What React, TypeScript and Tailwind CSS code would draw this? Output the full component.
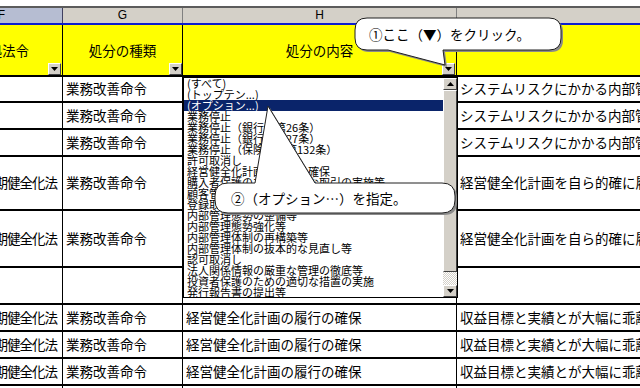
import React from 'react';

const listItems = [
  '(すべて)',
  '(トップテン...)',
  '(オプション...)',
  '業務停止',
  '業務停止（銀行法第26条）',
  '業務停止（銀行法第27条）',
  '業務停止（保険業法第132条）',
  '許可取消し',
  '経営健全化計画の履行の確保',
  '購入者保護のための適正な取引の実施等',
  '顧客管理態勢の整備等',
  '登録取消し',
  '内部管理態勢の整備等',
  '内部管理態勢強化等',
  '内部管理体制の再構築等',
  '内部管理体制の抜本的な見直し等',
  '認可取消し',
  '法人関係情報の厳重な管理の徹底等',
  '投資者保護のための適切な措置の実施',
  '発行報告書の提出等',
];

const rows = [
  { h: 'h-[26px]', f: '', g: '業務改善命令', c: '内部管理態勢の整備等', i: 'システムリスクにかかる内部管理態勢の不備' },
  { h: 'h-[27px]', f: '', g: '業務改善命令', c: '内部管理態勢の整備等', i: 'システムリスクにかかる内部管理態勢の不備' },
  { h: 'h-[27px]', f: '', g: '業務改善命令', c: '内部管理態勢の整備等', i: 'システムリスクにかかる内部管理態勢の不備' },
  { h: 'h-[54px]', f: '金融機能早期健全化法', g: '業務改善命令', c: '経営健全化計画の履行の確保', i: '経営健全化計画を自ら的確に履行していない' },
  { h: 'h-[57px]', f: '金融機能早期健全化法', g: '業務改善命令', c: '経営健全化計画の履行の確保', i: '経営健全化計画を自ら的確に履行していない' },
  { h: 'h-[37px]', f: '', g: '', c: '', i: '' },
  { h: 'h-[27px]', f: '金融機能早期健全化法', g: '業務改善命令', c: '経営健全化計画の履行の確保', i: '収益目標と実績とが大幅に乖離している' },
  { h: 'h-[27px]', f: '金融機能早期健全化法', g: '業務改善命令', c: '経営健全化計画の履行の確保', i: '収益目標と実績とが大幅に乖離している' },
  { h: 'h-[27px]', f: '金融機能早期健全化法', g: '業務改善命令', c: '経営健全化計画の履行の確保', i: '収益目標と実績とが大幅に乖離している' },
  { h: 'h-[27px]', f: '', g: '', c: '', i: '' },
];

const FilterButton = ({ className }: { className: string }) => (
  <div className={`absolute bottom-0 w-[13px] h-[12px] bg-[#d4d0c8] border border-t-white border-l-white border-b-[#404040] border-r-[#404040] flex items-center justify-center ${className}`}>
    <svg width="7" height="4" viewBox="0 0 7 4"><polygon points="0,0 7,0 3.5,4" fill="black" /></svg>
  </div>
);

const ScrollButton = ({ up }: { up: boolean }) => (
  <div className="h-[12px] bg-[#d4d0c8] border border-t-white border-l-white border-b-[#404040] border-r-[#404040] flex items-center justify-center">
    <svg width="7" height="4" viewBox="0 0 7 4">
      <polygon points={up ? '0,4 7,4 3.5,0' : '0,0 7,0 3.5,4'} fill="black" />
    </svg>
  </div>
);

// callout outlines: rounded box + pointer
const bubble1 =
  'M 367 18 H 549 Q 561 18 561 30 V 38 Q 561 50 549 50 H 443 L 445 65 L 388 50 H 367 Q 355 50 355 38 V 30 Q 355 18 367 18 Z';
const bubble2 =
  'M 228 183 H 255 L 268 106 L 315 183 H 442 Q 455 183 455 196 V 200 Q 455 213 442 213 H 228 Q 215 213 215 200 V 196 Q 215 183 228 183 Z';

export default function App() {
  return (
    <div className="relative w-[640px] h-[388px] overflow-hidden bg-white text-black font-['Noto_Sans_CJK_JP',sans-serif]">
      <div className="h-[6px]" />
      <div className="h-[2px] bg-[#5c5c5c]" />

      <div className="-ml-[59px] w-[716px]">
        {/* column letters */}
        <div className="grid grid-cols-[122px_120px_274px_200px] h-[15px] bg-[#d4d0c8] text-[12px] leading-[15px] font-['Liberation_Sans',sans-serif]">
          <div className="bg-[#b6bdd2] border-r border-[#404060] text-center">F</div>
          <div className="border-r border-[#808080] text-center">G</div>
          <div className="border-r border-[#808080] text-center">H</div>
          <div />
        </div>
        <div className="h-[2px] bg-[#0c1ecf]" />

        {/* header */}
        <div className="grid grid-cols-[122px_120px_274px_200px] h-[52px] bg-[#ffff00] border-b-2 border-black text-[13.5px]">
          <div className="relative border-r border-black flex items-center justify-center pl-[1px]">
            根拠法令
            <FilterButton className="right-[1px]" />
          </div>
          <div className="relative border-r border-black flex items-center justify-center">
            処分の種類
            <FilterButton className="right-0" />
          </div>
          <div className="relative border-r border-black flex items-center justify-center">
            処分の内容
            <FilterButton className="right-[1px]" />
          </div>
          <div />
        </div>

        {rows.map((r, idx) => (
          <div key={idx} className={`grid grid-cols-[122px_120px_274px_200px] border-b-2 border-black text-[13.5px] leading-none ${r.h}`}>
            <div className="border-r border-black flex items-center justify-end pr-[5px] overflow-hidden whitespace-nowrap tracking-[-1px]">{r.f}</div>
            <div className="border-r border-black flex items-center pl-[3px] whitespace-nowrap">{r.g}</div>
            <div className="border-r border-black flex items-center pl-[3px] whitespace-nowrap">{r.c}</div>
            <div className="flex items-center pl-[3px] whitespace-nowrap">{r.i}</div>
          </div>
        ))}
      </div>

      {/* autofilter dropdown list */}
      <div className="absolute left-[183px] top-[77px] w-[275px] h-[221px] bg-white border border-black flex">
        <div className="flex-1 flex flex-col text-[11px] leading-[11px] overflow-hidden">
          {listItems.map((t, i) => (
            <div key={i} className={`h-[11px] shrink-0 pl-[3px] whitespace-nowrap ${i === 2 ? 'bg-[#0a246a] text-white' : ''}`}>{t}</div>
          ))}
        </div>
        <div className="w-[14px] flex flex-col">
          <ScrollButton up />
          <div className="flex-1 bg-[#d4d0c8] border border-t-white border-l-white border-b-[#404040] border-r-[#404040]" />
          <div className="h-[13px] bg-[repeating-conic-gradient(#ffffff_0%_25%,#d4d0c8_0%_50%)] bg-[length:2px_2px]" />
          <ScrollButton up={false} />
        </div>
      </div>

      {/* callouts */}
      <svg className="absolute left-0 top-0 pointer-events-none" width="640" height="388">
        <path d={bubble1} fill="#8a8a8a" transform="translate(2 2)" />
        <path d={bubble1} fill="white" stroke="#202020" strokeWidth="1" />
        <path d={bubble2} fill="#8a8a8a" transform="translate(2 2)" />
        <path d={bubble2} fill="white" stroke="#202020" strokeWidth="1" />
      </svg>
      <div className="absolute left-[369px] top-[26px] text-[13.5px] leading-[16px] whitespace-nowrap">①ここ（▼）をクリック。</div>
      <div className="absolute left-[231px] top-[190px] text-[13.5px] leading-[16px] whitespace-nowrap">②（オプション…）を指定。</div>
    </div>
  );
}
